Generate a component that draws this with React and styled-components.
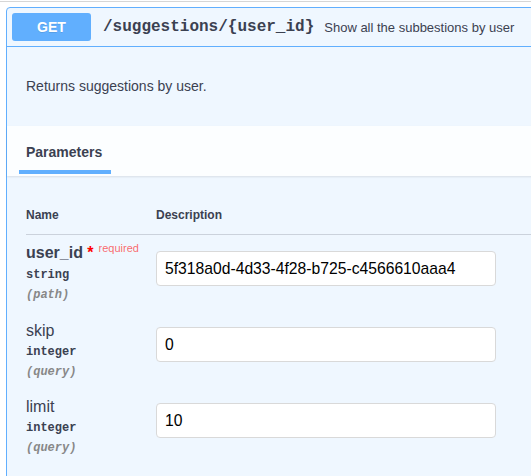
import React from "react";
import styled, { createGlobalStyle } from "styled-components";

const Global = createGlobalStyle`
  html, body { margin: 0; padding: 0; background: #fff; }
  body { font-family: "Liberation Sans", Arial, sans-serif; color: #3b4151; }
`;

const Page = styled.div`
  width: 100vw;
  height: 100vh;
  overflow: hidden;
`;

const Divider = styled.div`
  margin-top: 1px;
  height: 1px;
  background: #d6d6d6;
`;

const Block = styled.div`
  margin: 5px 0 0 6px;
  width: 640px;
  border: 1px solid #61affe;
  border-radius: 4px;
  background: #eff7ff;
  min-height: 520px;
`;

const Summary = styled.div`
  display: flex;
  align-items: center;
  padding: 5px;
  border-bottom: 1px solid #61affe;
`;

const Method = styled.span`
  display: inline-flex;
  align-items: center;
  justify-content: center;
  width: 79px;
  height: 28px;
  border-radius: 3px;
  background: #61affe;
  color: #fff;
  font-size: 14px;
  font-weight: 700;
  text-shadow: 0 1px 0 rgba(0, 0, 0, 0.1);
`;

const Path = styled.span`
  margin-left: 12px;
  font-family: "Liberation Mono", "Courier New", monospace;
  font-weight: 700;
  font-size: 16px;
  color: #3b4151;
`;

const Summ = styled.span`
  margin-left: 10px;
  font-size: 13px;
  color: #3b4151;
`;

const Description = styled.div`
  padding: 29px 19px 30px;
  font-size: 14px;
  line-height: 20px;
`;

const SectionHeader = styled.div`
  height: 50px;
  background: rgba(255, 255, 255, 0.8);
  box-shadow: 0 1px 2px rgba(0, 0, 0, 0.1);
  padding-left: 12px;
  display: flex;
  align-items: flex-end;
`;

const Tab = styled.div`
  position: relative;
  padding: 0 9px 0 7px;
  height: 48px;
  display: flex;
  align-items: center;
  font-size: 14px;
  font-weight: 700;
  color: #3b4151;
  &::after {
    content: "";
    position: absolute;
    left: 0;
    right: 0;
    bottom: 2px;
    height: 4px;
    background: #61affe;
  }
`;

const TableWrap = styled.div`
  padding: 20px 0 0 19px;
`;

const HeadRow = styled.div`
  display: grid;
  grid-template-columns: 130px 1fr;
  border-bottom: 1px solid rgba(59, 65, 81, 0.2);
`;

const Th = styled.div`
  padding: 12px 0;
  font-size: 12px;
  line-height: 14px;
  font-weight: 700;
  color: #3b4151;
`;

const Row = styled.div`
  display: grid;
  grid-template-columns: 130px 1fr;
  height: 76px;
`;

const NameCol = styled.div`
  padding-top: ${(p) => (p.$required ? 8 : 10)}px;
`;

const Name = styled.div`
  font-size: 16px;
  line-height: 20px;
  font-weight: ${(p) => (p.$required ? 700 : 400)};
  color: #3b4151;
  white-space: nowrap;
`;

const Star = styled.span`
  color: #ff0000;
  font-size: 16px;
`;

const Req = styled.span`
  position: relative;
  top: -6px;
  padding-left: 5px;
  font-size: 11px;
  font-weight: 400;
  color: rgba(255, 0, 0, 0.6);
`;

const Type = styled.div`
  margin-top: 1px;
  font-family: "Liberation Mono", "Courier New", monospace;
  font-weight: 700;
  font-size: 12px;
  line-height: 20px;
  color: #3b4151;
`;

const In = styled.div`
  font-family: "Liberation Mono", "Courier New", monospace;
  font-weight: 700;
  font-style: italic;
  font-size: 12px;
  line-height: 20px;
  color: #888;
`;

const DescCol = styled.div`
  padding-top: 16px;
`;

const Input = styled.input`
  box-sizing: border-box;
  width: 340px;
  height: 35px;
  padding: 0 8px;
  border: 1px solid #d9d9d9;
  border-radius: 4px;
  background: #fff;
  font-family: "Liberation Sans", Arial, sans-serif;
  font-size: 15.7px;
  color: #000;
  outline: none;
`;

const params = [
  { name: "user_id", required: true, type: "string", in: "path", value: "5f318a0d-4d33-4f28-b725-c4566610aaa4" },
  { name: "skip", type: "integer", in: "query", value: "0" },
  { name: "limit", type: "integer", in: "query", value: "10" },
];

export default function App() {
  return (
    <Page>
      <Global />
      <Divider />
      <Block>
        <Summary>
          <Method>GET</Method>
          <Path>/suggestions/{"{user_id}"}</Path>
          <Summ>Show all the subbestions by user</Summ>
        </Summary>
        <Description>Returns suggestions by user.</Description>
        <SectionHeader>
          <Tab>Parameters</Tab>
        </SectionHeader>
        <TableWrap>
          <HeadRow>
            <Th>Name</Th>
            <Th>Description</Th>
          </HeadRow>
          {params.map((p) => (
            <Row key={p.name}>
              <NameCol $required={p.required}>
                <Name $required={p.required}>
                  {p.name}
                  {p.required && (
                    <>
                      <Star>&nbsp;*</Star>
                      <Req>required</Req>
                    </>
                  )}
                </Name>
                <Type>{p.type}</Type>
                <In>({p.in})</In>
              </NameCol>
              <DescCol>
                <Input type="text" defaultValue={p.value} />
              </DescCol>
            </Row>
          ))}
        </TableWrap>
      </Block>
    </Page>
  );
}
